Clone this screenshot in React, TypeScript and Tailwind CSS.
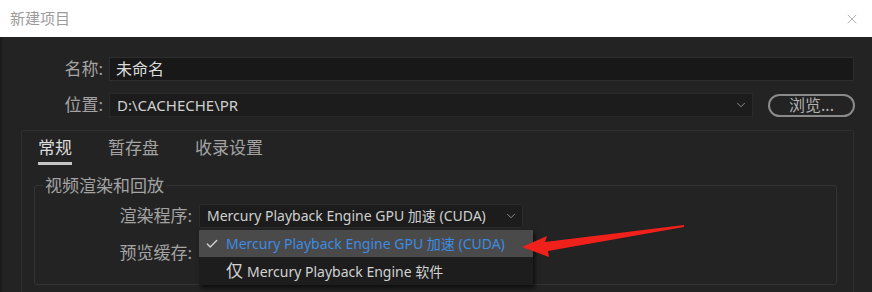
import { Check, ChevronDown, X } from 'lucide-react';

const font = 'font-["Noto_Sans","Noto_Sans_CJK_SC",sans-serif]';

export default function App() {
  return (
    <div className={`relative h-[292px] w-[872px] overflow-hidden bg-[#232323] ${font}`}>
      {/* title bar */}
      <div className="flex h-[37px] items-center justify-between bg-white pl-[10px] pr-[12px]">
        <span className="text-[15px] text-[#9b9b9b]">新建项目</span>
        <X className="h-[16px] w-[16px] text-[#8a8a8a]" strokeWidth={1} />
      </div>

      <div className="border-l-2 border-[#1c1c1c] pt-[20px]">
        {/* name */}
        <div className="flex items-center gap-[6px]">
          <span className="w-[101px] text-right text-[17px] leading-[24px] text-[#a3a3a3]">名称:</span>
          <div className="flex h-[24px] w-[745px] items-center border border-[#2e2e2e] bg-[#181818] px-[6px] text-[16px] text-[#dcdcdc]">
            未命名
          </div>
        </div>

        {/* location */}
        <div className="mt-[12px] flex items-center gap-[6px]">
          <span className="w-[101px] text-right text-[17px] leading-[24px] text-[#a3a3a3]">位置:</span>
          <div className="flex h-[24px] w-[644px] items-center justify-between border border-[#292929] bg-[#1c1c1c] pl-[7px] pr-[4px] text-[15px] text-[#cfcfcf]">
            <span>D:\CACHECHE\PR</span>
            <ChevronDown className="h-[14px] w-[14px] text-[#9a9a9a]" strokeWidth={1.5} />
          </div>
          <button className="ml-[9px] flex h-[23px] w-[87px] items-center justify-center rounded-full border-2 border-[#8a8a8a] text-[16px] leading-none text-[#b0b0b0]">
            浏览...
          </button>
        </div>

        {/* tab panel */}
        <div className="ml-[19px] mt-[13px] h-[180px] w-[833px] rounded-[2px] border border-[#2f2f2f]">
          <div className="flex gap-[36px] pl-[16px] pt-[4px] text-[17px] text-[#a3a3a3]">
            <span className="border-b-[3px] border-[#c4c4c4] pb-[1px] text-[#dcdcdc]">常规</span>
            <span>暂存盘</span>
            <span>收录设置</span>
          </div>

          <fieldset className="ml-[12px] mt-[11px] h-[109px] w-[803px] rounded-[3px] border border-[#343434] px-0 pb-0">
            <legend className="ml-[8px] px-[2px] text-[17px] leading-[20px] text-[#a3a3a3]">视频渲染和回放</legend>
            <div className="mt-[8px] flex items-center gap-[7px]">
              <span className="w-[157px] text-right text-[17px] leading-[24px] text-[#a3a3a3]">渲染程序:</span>
              <div className="flex h-[24px] w-[324px] items-center justify-between rounded-[2px] border border-[#2b2b2b] bg-[#1c1c1c] pl-[7px] pr-[4px] text-[14px] text-[#cfcfcf]">
                <span>Mercury Playback Engine GPU 加速 (CUDA)</span>
                <ChevronDown className="h-[14px] w-[14px] text-[#9a9a9a]" strokeWidth={1.5} />
              </div>
            </div>
            <div className="mt-[13px] flex items-center gap-[7px]">
              <span className="w-[157px] text-right text-[17px] leading-[24px] text-[#a3a3a3]">预览缓存:</span>
            </div>
          </fieldset>
        </div>
      </div>

      {/* open dropdown menu */}
      <div className="absolute left-[199px] top-[230px] w-[334px] bg-[#1d1d1d] shadow-[2px_3px_4px_rgba(0,0,0,0.6)]">
        <div className="flex h-[27px] items-center bg-[#4a4a4a] text-[14px] text-[#3e8ae0]">
          <Check className="ml-[6px] h-[14px] w-[14px] text-[#cfcfcf]" strokeWidth={2.5} />
          <span className="ml-[7px]">Mercury Playback Engine GPU 加速 (CUDA)</span>
        </div>
        <div className="flex h-[28px] items-center pl-[27px] text-[14px] text-[#d2d2d2]">
          <span className="mr-[4px] text-[17px]">仅</span>
          <span>Mercury Playback Engine 软件</span>
        </div>
      </div>

      {/* red annotation arrow */}
      <svg className="absolute left-0 top-0" width="872" height="292">
        <polygon points="684,225 545,242 547,236 522,247 549,257 548,251 684,227" fill="#f0201b" />
      </svg>
    </div>
  );
}
